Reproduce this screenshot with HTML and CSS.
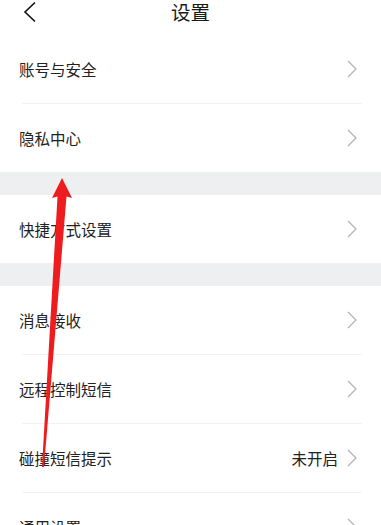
FILE: index.html
```html
<!DOCTYPE html>
<html lang="zh-CN">

<head>
    <meta charset="UTF-8">
    <title>设置</title>
    <link rel="stylesheet" href="styles.css">
</head>

<body>
    <div class="page">
        <div class="header">
            <span class="back">
                <svg width="14" height="22" viewBox="0 0 14 22">
                    <polyline points="12,1.5 2,11 12,20.5" fill="none" stroke="#111" stroke-width="1.6" />
                </svg>
            </span>
            <div class="title">设置</div>
        </div>

        <div class="group">
            <div class="row">
                <span class="label">账号与安全</span>
                <svg class="chevron" viewBox="0 0 10 18"><polyline points="1,1 9,9 1,17" /></svg>
            </div>
            <div class="divider"></div>
            <div class="row">
                <span class="label">隐私中心</span>
                <svg class="chevron" viewBox="0 0 10 18"><polyline points="1,1 9,9 1,17" /></svg>
            </div>
        </div>

        <div class="gap"></div>

        <div class="group">
            <div class="row">
                <span class="label">快捷方式设置</span>
                <svg class="chevron" viewBox="0 0 10 18"><polyline points="1,1 9,9 1,17" /></svg>
            </div>
        </div>

        <div class="gap"></div>

        <div class="group">
            <div class="row">
                <span class="label">消息接收</span>
                <svg class="chevron" viewBox="0 0 10 18"><polyline points="1,1 9,9 1,17" /></svg>
            </div>
            <div class="divider"></div>
            <div class="row">
                <span class="label">远程控制短信</span>
                <svg class="chevron" viewBox="0 0 10 18"><polyline points="1,1 9,9 1,17" /></svg>
            </div>
            <div class="divider"></div>
            <div class="row">
                <span class="label">碰撞短信提示</span>
                <span class="value">未开启</span>
                <svg class="chevron" viewBox="0 0 10 18"><polyline points="1,1 9,9 1,17" /></svg>
            </div>
            <div class="divider"></div>
            <div class="row">
                <span class="label">通用设置</span>
                <svg class="chevron" viewBox="0 0 10 18"><polyline points="1,1 9,9 1,17" /></svg>
            </div>
        </div>

        <!-- 标注箭头 -->
        <svg class="mark" width="381" height="525" viewBox="0 0 381 525">
            <polygon points="62,178 72,198 66.5,196.5 44,467 42,467 57.5,196.5 52,198" fill="#ee1b1f" />
        </svg>
    </div>
</body>

</html>
```

FILE: styles.css
```css
body {
    margin: 0;
    background-color: #fff;
    font-family: "Noto Sans CJK SC", "Noto Sans", sans-serif;
    color: #222;
}

.page {
    position: relative;
    width: 381px;
    height: 525px;
    overflow: hidden;
}

.header {
    height: 35px;
    display: flex;
    justify-content: center;
}

.back {
    position: absolute;
    left: 23px;
    top: 1px;
}

.title {
    font-size: 19.5px;
    line-height: 24px;
    color: #1a1a1a;
}

.row {
    height: 68px;
    display: flex;
    align-items: center;
    padding: 0 24px 0 19px;
    font-size: 15.5px;
}

.label {
    flex: 1;
}

.value {
    margin-right: 9px;
}

.chevron {
    width: 10px;
    height: 18px;
    fill: none;
    stroke: #b4b4b4;
    stroke-width: 1.3;
}

.divider {
    height: 1px;
    margin: 0 19px 0 22px;
    background-color: #f2f2f3;
}

.gap {
    height: 23px;
    background-color: #eeeff1;
}

.mark {
    position: absolute;
    left: 0;
    top: 0;
}
```
